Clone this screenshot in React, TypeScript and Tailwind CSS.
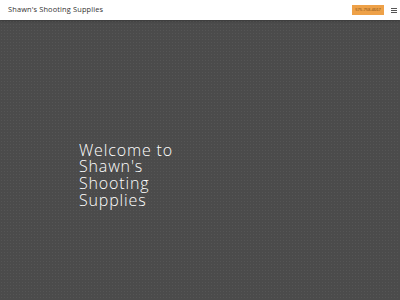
export default function App() {
  return (
    <div className="w-[400px] h-[300px] flex flex-col overflow-hidden font-['Open_Sans',sans-serif]">
      <header className="h-[20px] bg-white flex items-center justify-between pl-[8px] pr-[3px] shadow-[0_1px_2px_rgba(0,0,0,0.25)] relative z-10">
        <span className="text-[7.4px] text-[#333] tracking-[0.15px]">Shawn's Shooting Supplies</span>
        <div className="flex items-center gap-[7px]">
          <button className="h-[10px] w-[32px] bg-[#eea148] text-[#7a4a10] text-[4px] leading-[10px] text-center">575-758-4667</button>
          <svg width="6" height="5" viewBox="0 0 6 5">
            <rect x="0" y="0" width="6" height="1" fill="#555" />
            <rect x="0" y="2" width="6" height="1" fill="#555" />
            <rect x="0" y="4" width="6" height="1" fill="#555" />
          </svg>
        </div>
      </header>
      <main className="flex-1 bg-[#4b4b4b] bg-[image:radial-gradient(#555555_0.7px,transparent_0.7px)] bg-[size:3px_3px] flex items-center pl-[79px] pt-[30px]">
        <h1 className="text-white text-[16px] leading-[16.7px] font-light tracking-[0.85px]">
          Welcome to<br />Shawn's<br />Shooting<br />Supplies
        </h1>
      </main>
    </div>
  )
}
